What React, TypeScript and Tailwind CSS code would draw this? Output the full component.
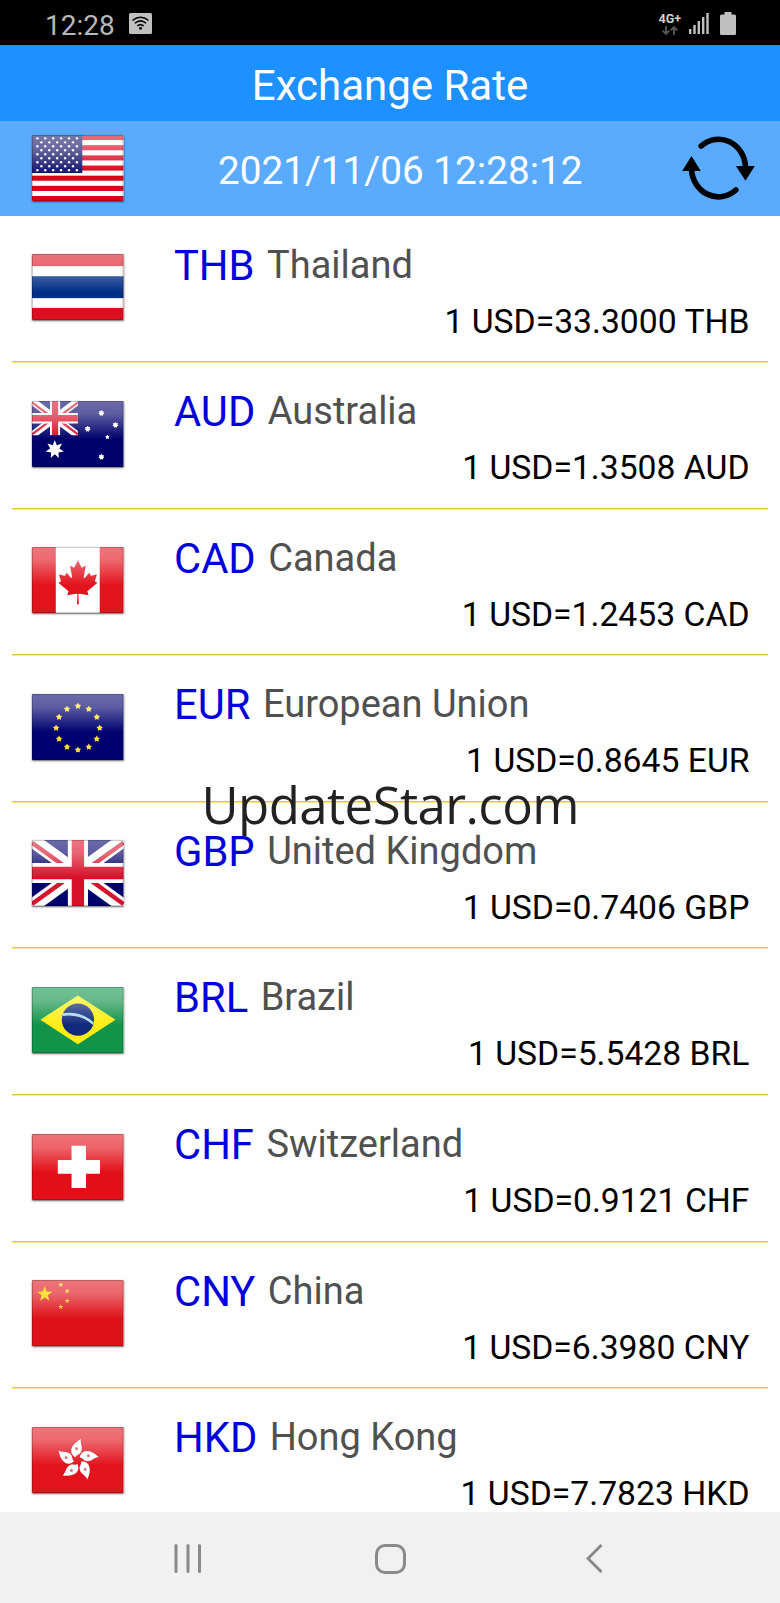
import React from 'react';

interface Rate {
  code: string;
  country: string;
  value: string;
  flag: React.ReactNode;
}

const starPoints = (cx: number, cy: number, r: number, tips = 5, inner = 0.4) => {
  const points: string[] = [];
  for (let i = 0; i < tips * 2; i++) {
    const radius = i % 2 === 0 ? r : r * inner;
    const angle = (Math.PI * i) / tips - Math.PI / 2;
    points.push(`${cx + radius * Math.cos(angle)},${cy + radius * Math.sin(angle)}`);
  }
  return points.join(' ');
};

const Star = ({ cx, cy, r, tips, inner }: { cx: number; cy: number; r: number; tips?: number; inner?: number }) => (
  <polygon points={starPoints(cx, cy, r, tips, inner)} />
);

const UnionJack = () => (
  <>
    <rect width="273" height="196" fill="#00006b" />
    <path d="M0 0L273 196M273 0L0 196" stroke="#fff" strokeWidth="42" />
    <path d="M0 8L110 87M273 8L163 87M0 190L110 111M273 190L163 111" stroke="#d6142e" strokeWidth="13" />
    <path d="M137 0V196M0 98H273" stroke="#fff" strokeWidth="60" />
    <path d="M137 0V196M0 98H273" stroke="#d80f28" strokeWidth="37" />
  </>
);

const UsaFlag = () => (
  <>
    <rect width="273" height="196" fill="#fff" />
    {[0, 2, 4, 6, 8, 10, 12].map((n) => (
      <rect key={n} y={n * 15.1} width="273" height="15.1" fill="#dc0019" />
    ))}
    <rect width="150" height="113" fill="#14146e" />
    <g fill="#fff">
      {[0, 1, 2, 3, 4, 5, 6, 7, 8].map((row) =>
        Array.from({ length: row % 2 ? 5 : 6 }, (_, col) => (
          <circle key={`${row}-${col}`} cx={16 + (row % 2 ? 12 : 0) + col * 23.6} cy={10 + row * 11.8} r="3.6" />
        ))
      )}
    </g>
  </>
);

const ThailandFlag = () => (
  <>
    <rect width="273" height="196" fill="#db0f20" />
    <rect y="36" width="273" height="124" fill="#fff" />
    <rect y="66" width="273" height="65" fill="#002e85" />
  </>
);

const AustraliaFlag = () => (
  <>
    <rect width="273" height="196" fill="#00006b" />
    <svg width="137" height="102" viewBox="0 0 273 196" preserveAspectRatio="none">
      <UnionJack />
    </svg>
    <g fill="#fff">
      <Star cx={68} cy={144} r={28} tips={7} inner={0.5} />
      <Star cx={207} cy={36} r={9} tips={7} inner={0.7} />
      <Star cx={166} cy={83} r={9} tips={7} inner={0.7} />
      <Star cx={249} cy={71} r={9} tips={7} inner={0.7} />
      <Star cx={225} cy={107} r={7} inner={0.6} />
      <Star cx={207} cy={166} r={9} tips={7} inner={0.7} />
    </g>
  </>
);

const CanadaFlag = () => (
  <>
    <rect width="273" height="196" fill="#e3131d" />
    <rect x="71" width="131" height="196" fill="#fff" />
    <path
      transform="translate(137 104) scale(.0315 .0325)"
      fill="#e3131d"
      d="m-90 2030 45-863a95 95 0 0 0-111-98l-859 151 116-320a65 65 0 0 0-20-73l-941-762 212-99a65 65 0 0 0 34-79l-186-572 542 115a65 65 0 0 0 73-38l105-247 423 454a65 65 0 0 0 111-57l-204-1052 327 189a65 65 0 0 0 91-27l332-652 332 652a65 65 0 0 0 91 27l327-189-204 1052a65 65 0 0 0 111 57l423-454 105 247a65 65 0 0 0 73 38l542-115-186 572a65 65 0 0 0 34 79l212 99-941 762a65 65 0 0 0-20 73l116 320-859-151a95 95 0 0 0-111 98l45 863z"
    />
  </>
);

const EuropeFlag = () => (
  <>
    <rect width="273" height="196" fill="#000070" />
    <g fill="#ffe437">
      {Array.from({ length: 12 }, (_, i) => (
        <Star key={i} cx={137 + 65 * Math.sin((i * Math.PI) / 6)} cy={101 - 65 * Math.cos((i * Math.PI) / 6)} r={10} inner={0.55} />
      ))}
    </g>
  </>
);

const BrazilFlag = () => (
  <>
    <rect width="273" height="196" fill="#12934a" />
    <path d="M25 97L137 25L249 97L137 170Z" fill="#ffee12" />
    <circle cx="137" cy="97" r="48" fill="#10297c" />
    <path d="M91 82Q145 74 183 109" fill="none" stroke="#a8d8ea" strokeWidth="8" />
  </>
);

const SwissFlag = () => <rect width="273" height="196" fill="#e30f18" />;

const ChinaFlag = () => (
  <>
    <rect width="273" height="196" fill="#df1219" />
    <g fill="#ffd51e">
      <Star cx={86} cy={14} r={8} />
      <Star cx={105} cy={33} r={8} />
      <Star cx={105} cy={62} r={8} />
      <Star cx={86} cy={80} r={8} />
    </g>
  </>
);

const HongKongFlag = () => <rect width="273" height="196" fill="#e3131d" />;

// parts that stay bright above the gloss
const SwissCross = () => <path d="M118 35H161V77H203V118H161V160H118V118H77V77H118Z" fill="#fff" />;

const ChinaStar = () => <polygon points={starPoints(38, 42, 24)} fill="#ffe13c" />;

const Bauhinia = () => (
  <>
    {[0, 72, 144, 216, 288].map((deg) => (
      <g key={deg} transform={`rotate(${deg} 136 99)`}>
        <path d="M130 90C110 80 112 54 146 36C142 48 154 62 146 75C142 82 132 83 130 90Z" fill="#fff" />
        <circle cx="133" cy="64" r="4.5" fill="#d97a84" />
      </g>
    ))}
  </>
);

const Flag = ({ id, children, top }: { id: string; children: React.ReactNode; top?: React.ReactNode }) => (
  <svg
    viewBox="0 0 273 196"
    preserveAspectRatio="none"
    className="h-[66px] w-[91.5px] shrink-0 rounded-[1px] shadow-[0_1px_2px_rgba(0,0,0,0.6)]"
  >
    <defs>
      <linearGradient id={`gloss-${id}`} x1="0" y1="0" x2="0" y2="1">
        <stop offset="0" stopColor="#fff" stopOpacity="0.42" />
        <stop offset="0.2" stopColor="#fff" stopOpacity="0.36" />
        <stop offset="0.58" stopColor="#fff" stopOpacity="0" />
      </linearGradient>
    </defs>
    {children}
    <rect width="273" height="196" fill={`url(#gloss-${id})`} />
    {top}
    <rect x="1.5" y="1.5" width="270" height="193" fill="none" stroke="#000" strokeOpacity="0.2" strokeWidth="3" />
  </svg>
);

const rates: Rate[] = [
  { code: 'THB', country: 'Thailand', value: '33.3000', flag: <Flag id="thb"><ThailandFlag /></Flag> },
  { code: 'AUD', country: 'Australia', value: '1.3508', flag: <Flag id="aud"><AustraliaFlag /></Flag> },
  { code: 'CAD', country: 'Canada', value: '1.2453', flag: <Flag id="cad"><CanadaFlag /></Flag> },
  { code: 'EUR', country: 'European Union', value: '0.8645', flag: <Flag id="eur"><EuropeFlag /></Flag> },
  { code: 'GBP', country: 'United Kingdom', value: '0.7406', flag: <Flag id="gbp"><UnionJack /></Flag> },
  { code: 'BRL', country: 'Brazil', value: '5.5428', flag: <Flag id="brl"><BrazilFlag /></Flag> },
  { code: 'CHF', country: 'Switzerland', value: '0.9121', flag: <Flag id="chf" top={<SwissCross />}><SwissFlag /></Flag> },
  { code: 'CNY', country: 'China', value: '6.3980', flag: <Flag id="cny" top={<ChinaStar />}><ChinaFlag /></Flag> },
  { code: 'HKD', country: 'Hong Kong', value: '7.7823', flag: <Flag id="hkd" top={<Bauhinia />}><HongKongFlag /></Flag> },
];

const StatusBar = () => (
  <div className="flex h-[45px] shrink-0 items-center bg-black pl-[45px] pr-[44px] text-[#b8b8b8]">
    <span className="pt-[6px] text-[28px] leading-none">12:28</span>
    <svg className="ml-[14px] mt-[2px] h-[21px] w-[23px]" viewBox="0 0 23 21">
      <rect width="23" height="21" rx="1.5" fill="#c0c0c0" />
      <g fill="none" stroke="#000" strokeWidth="1.5">
        <path d="M3.5 7.5Q11.5 1 19.5 7.5" />
        <path d="M5.8 10.3Q11.5 5.5 17.2 10.3" />
        <path d="M8.2 13Q11.5 10.2 14.8 13" />
      </g>
      <circle cx="11.5" cy="15.3" r="1.5" fill="#000" />
    </svg>
    <div className="ml-auto flex flex-col items-center pt-[2px]">
      <span className="text-[12.5px] font-bold leading-[13px] text-[#d0d0d0]">4G+</span>
      <svg className="mt-px h-[9px] w-[16px]" viewBox="0 0 16 9" fill="none" stroke="#555" strokeWidth="1.9">
        <path d="M4 0V8M0.7 4.6L4 8L7.3 4.6M12 9V1M8.7 4.4L12 1L15.3 4.4" />
      </svg>
    </div>
    <svg className="ml-[8px] mt-[2px] h-[21px] w-[20px]" viewBox="0 0 20 21" fill="#c0c0c0">
      <rect x="0" y="16" width="2.4" height="5" />
      <rect x="4.3" y="12" width="2.4" height="9" />
      <rect x="8.6" y="8" width="2.4" height="13" />
      <rect x="13" y="4" width="2.4" height="17" />
      <rect x="17.3" y="0" width="2.4" height="21" />
    </svg>
    <svg className="ml-[11px] mt-[2px] h-[23px] w-[16px]" viewBox="0 0 16 23" fill="#c0c0c0">
      <rect x="4.5" width="7" height="4" rx="0.5" />
      <rect y="2.5" width="16" height="20.5" rx="1.5" />
    </svg>
  </div>
);

const RefreshIcon = () => (
  <svg className="h-[64px] w-[73px]" viewBox="907 408 218 192">
    <g fill="none" stroke="#000" strokeWidth="17" strokeLinecap="round">
      <path d="M964 438A81 87 0 0 1 1097 502" />
      <path d="M1068 570A81 87 0 0 1 935 508" />
    </g>
    <path d="M1068 498H1125L1097 542ZM907 513H963L935 468Z" />
  </svg>
);

const RateRow = ({ code, country, value, flag }: Rate) => (
  <div className="mx-3 flex h-[146.6px] shrink-0 border-b border-[#e3c62f] pl-5 shadow-[0_1px_0_#f8eb94]">
    <div className="shrink-0 pt-[38.5px]">{flag}</div>
    <div className="flex flex-1 flex-col pl-[50.5px] pr-[18.5px] pt-[26px]">
      <div className="flex items-start whitespace-nowrap">
        <span className="text-[41.7px] leading-[48px] text-[#0000dc]">{code}</span>
        <span className="ml-[12.5px] text-[38px] leading-[46px] text-[#505050]">{country}</span>
      </div>
      <div className="mt-[10px] text-right text-[33.7px] leading-[44px] text-black">
        1 USD={value} {code}
      </div>
    </div>
  </div>
);

const NavBar = () => (
  <div className="flex h-[91px] shrink-0 items-center bg-[#f1f1f1] pb-px pl-[174px] pt-[3px]">
    <svg className="h-[29px] w-[28px]" viewBox="0 0 28 29" stroke="#8a8a8a" strokeWidth="3" strokeLinecap="round">
      <path d="M2 1.5V27.5M14 1.5V27.5M25.5 1.5V27.5" />
    </svg>
    <div className="ml-[173px] h-[30px] w-[31px] rounded-[10px] border-[3px] border-[#8a8a8a]"></div>
    <svg className="ml-[180px] h-[29px] w-[17px]" viewBox="0 0 17 29" fill="none" stroke="#8a8a8a" strokeWidth="3">
      <path d="M15.5 1L2 14.5L15.5 28" />
    </svg>
  </div>
);

const App: React.FC = () => {
  return (
    <div className="relative flex h-[1603px] w-[780px] flex-col overflow-hidden bg-[#fefefe] font-['Roboto',sans-serif]">
      <StatusBar />
      <h1 className="h-[76px] shrink-0 bg-[#1e90ff] pt-[5px] text-center text-[42px] leading-[72px] text-white">
        Exchange Rate
      </h1>
      <div className="flex h-[94.5px] shrink-0 items-center justify-between bg-[#5aabfe] pl-8 pr-[25px]">
        <Flag id="usd"><UsaFlag /></Flag>
        <span className="pr-[5px] pt-[7px] text-[38.7px] leading-none text-white">2021/11/06 12:28:12</span>
        <RefreshIcon />
      </div>
      <div className="flex flex-1 flex-col overflow-hidden">
        {rates.map((rate) => (
          <RateRow key={rate.code} {...rate} />
        ))}
      </div>
      <NavBar />
      <div className="absolute left-[201.5px] top-[769px] whitespace-nowrap font-['Open_Sans',sans-serif] text-[51px] leading-[70px] tracking-[-0.6px] text-[#222]">
        UpdateStar.com
      </div>
    </div>
  );
};

export default App;
